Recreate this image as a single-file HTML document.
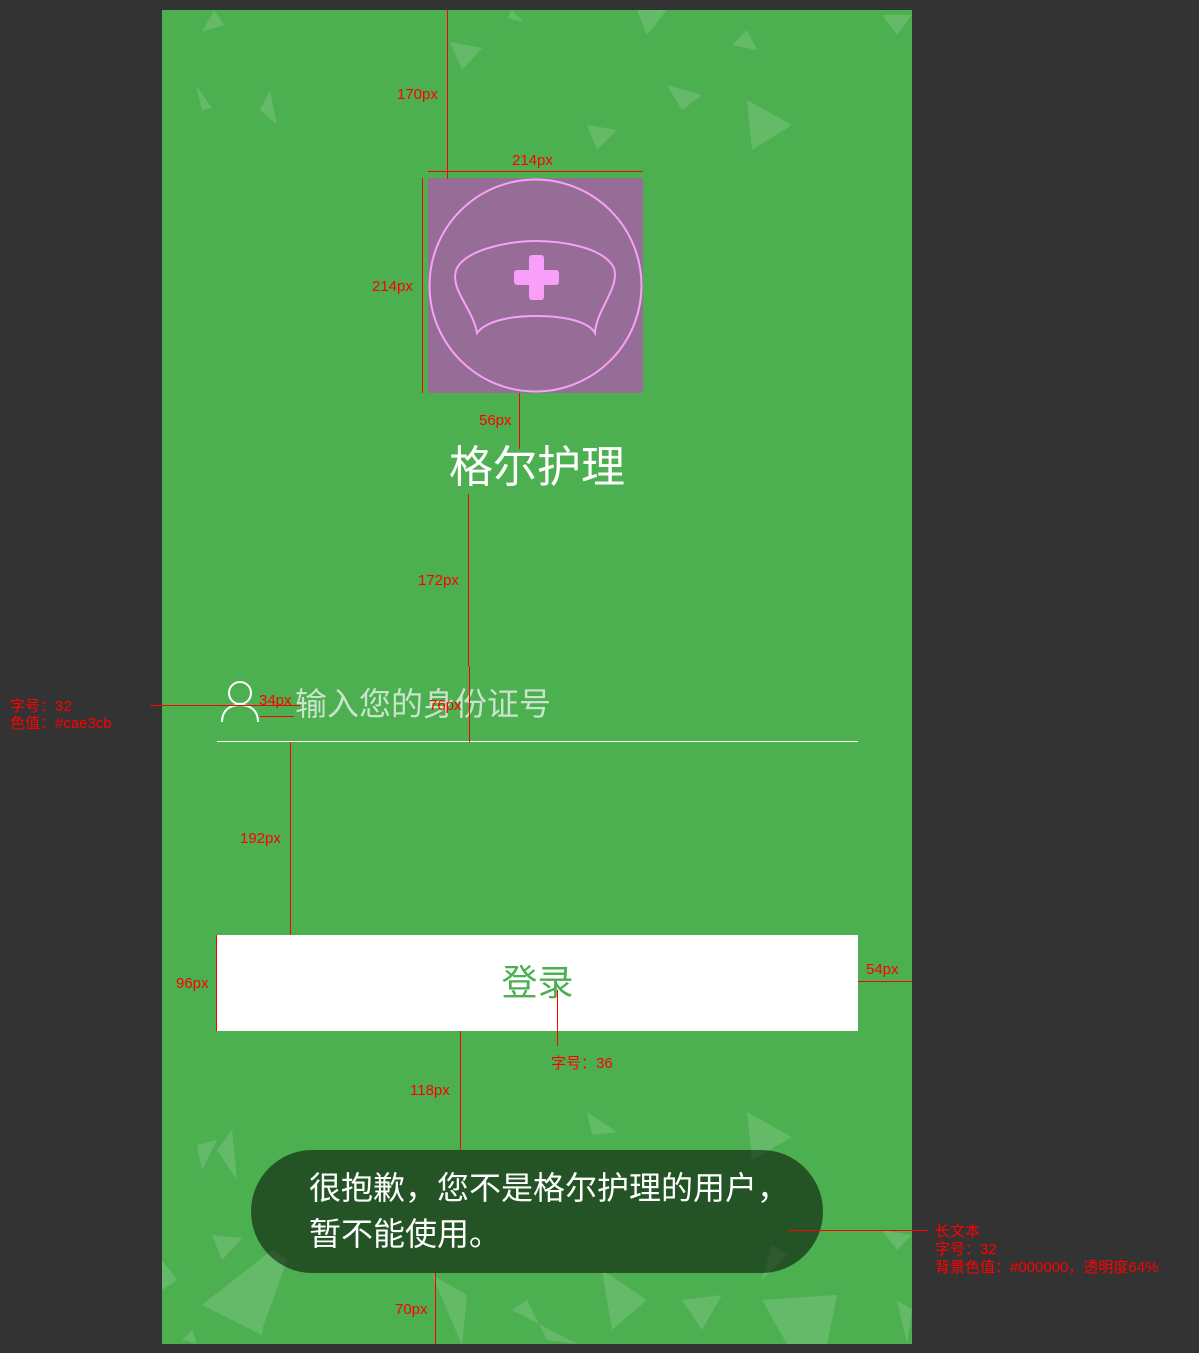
<!DOCTYPE html>
<html><head><meta charset="utf-8"><style>
*{margin:0;padding:0;box-sizing:border-box}
body{width:1199px;height:1353px;background:#333;position:relative;overflow:hidden;font-family:"Liberation Sans","Noto Sans CJK SC",sans-serif}
.a{position:absolute}
.r{position:absolute;color:#f00;font-size:15px;line-height:17px;white-space:nowrap}
.lv{position:absolute;width:1px;background:#f00}
.lh{position:absolute;height:1px;background:#f00}
</style></head><body>
<div class="a" style="left:162px;top:10px;width:750px;height:1334px;background:#4caf50;overflow:hidden">
<svg width="750" height="1334" style="position:absolute;left:0;top:0" fill="#fff">
<g opacity="0.14">
<polygon points="52,0 62,15 40,22"/><polygon points="34,75 50,98 40,100"/><polygon points="108,80 115,115 98,100"/>
<polygon points="288,32 320,38 300,60"/><polygon points="475,0 505,0 485,25"/><polygon points="585,20 595,40 570,35"/>
<polygon points="505,75 540,85 520,100"/><polygon points="425,115 455,120 435,140"/><polygon points="585,90 630,115 590,140"/>
<polygon points="720,5 750,5 735,25"/><polygon points="350,0 362,12 345,8"/>
<polygon points="425,1102 455,1122 430,1125"/><polygon points="585,1102 630,1127 590,1150"/><polygon points="35,1135 55,1130 40,1160"/>
<polygon points="55,1140 70,1120 75,1170"/><polygon points="50,1225 80,1228 60,1250"/><polygon points="110,1240 125,1250 100,1320"/>
<polygon points="40,1295 110,1240 100,1325"/><polygon points="270,1265 305,1285 300,1335"/><polygon points="365,1290 385,1330 415,1334 350,1300"/>
<polygon points="440,1260 485,1290 450,1320"/><polygon points="520,1290 560,1285 540,1320"/><polygon points="600,1290 675,1285 665,1334 625,1334"/>
<polygon points="735,1290 750,1300 745,1334"/><polygon points="720,1220 750,1225 735,1240"/><polygon points="20,1330 30,1320 35,1334"/>
<polygon points="610,1235 625,1245 600,1270"/><polygon points="0,1250 15,1270 0,1280"/>
</g>
</svg>
<svg class="a" style="left:266px;top:168px" width="215" height="215">
<rect width="215" height="215" fill="#956d96"/>
<ellipse cx="107.5" cy="107.5" rx="106" ry="106" fill="none" stroke="#f7a2f7" stroke-width="2"/>
<path d="M49,155 C45,130 20,110 29,90 C40,70 85,63 108,63 C130,63 175,68 186,90 C192,110 168,132 167,155 C160,143 135,138 108,138 C82,138 58,143 49,155 Z" fill="none" stroke="#f7a2f7" stroke-width="2"/>
<rect x="101" y="77" width="15" height="45" rx="3" fill="#f99ef9"/>
<rect x="86" y="92" width="45" height="15" rx="3" fill="#f99ef9"/>
</svg>
<div class="a" style="left:0;top:428px;width:750px;text-align:center;color:#fff;font-size:44px;line-height:60px">格尔护理</div>
<svg class="a" style="left:58px;top:670px" width="40" height="42"><circle cx="20" cy="13" r="11" fill="none" stroke="#fff" stroke-width="2"/><path d="M2,42 C2,30 10,25 20,25 C30,25 38,30 38,42" fill="none" stroke="#fff" stroke-width="2"/></svg>
<div class="a" style="left:133px;top:672px;color:#cae3cb;font-size:32px;line-height:44px">输入您的身份证号</div>
<div class="a" style="left:55px;top:731px;width:641px;height:1px;background:#fff"></div>
<div class="a" style="left:55px;top:925px;width:641px;height:96px;background:#fff;color:#4caf50;font-size:36px;text-align:center;line-height:96px">登录</div>
<div class="a" style="left:89px;top:1140px;width:572px;height:123px;border-radius:62px;background:rgba(0,0,0,0.52);color:#fff;font-size:32px;line-height:46px;padding:15px 0 0 58px">很抱歉，您不是格尔护理的用户，<br>暂不能使用。</div>
</div>
<!-- annotations -->
<div class="lv" style="left:447px;top:9px;height:170px"></div><div class="r" style="left:397px;top:86px">170px</div>
<div class="lh" style="left:428px;top:171px;width:215px"></div><div class="r" style="left:512px;top:152px">214px</div>
<div class="lv" style="left:422px;top:178px;height:215px"></div><div class="r" style="left:372px;top:278px">214px</div>
<div class="lv" style="left:519px;top:393px;height:56px"></div><div class="r" style="left:479px;top:412px">56px</div>
<div class="lv" style="left:468px;top:494px;height:172px"></div><div class="r" style="left:418px;top:572px">172px</div>
<div class="lv" style="left:469px;top:666px;height:76px"></div><div class="r" style="left:429px;top:697px">76px</div>
<div class="lh" style="left:150px;top:705px;width:150px"></div><div class="r" style="left:259px;top:692px">34px</div>
<div class="lh" style="left:260px;top:716px;width:34px"></div>
<div class="r" style="left:10px;top:698px">字号：32<br>色值：#cae3cb</div>
<div class="lv" style="left:290px;top:742px;height:193px"></div><div class="r" style="left:240px;top:830px">192px</div>
<div class="lv" style="left:216px;top:935px;height:96px"></div><div class="r" style="left:176px;top:975px">96px</div>
<div class="lh" style="left:858px;top:981px;width:54px"></div><div class="r" style="left:866px;top:961px">54px</div>
<div class="lv" style="left:557px;top:990px;height:56px"></div><div class="r" style="left:551px;top:1055px">字号：36</div>
<div class="lv" style="left:460px;top:1031px;height:119px"></div><div class="r" style="left:410px;top:1082px">118px</div>
<div class="lh" style="left:788px;top:1230px;width:140px"></div>
<div class="r" style="left:935px;top:1223px;line-height:18px">长文本<br>字号：32<br>背景色值：#000000，透明度64%</div>
<div class="lv" style="left:435px;top:1273px;height:71px"></div><div class="r" style="left:395px;top:1301px">70px</div>
</body></html>
